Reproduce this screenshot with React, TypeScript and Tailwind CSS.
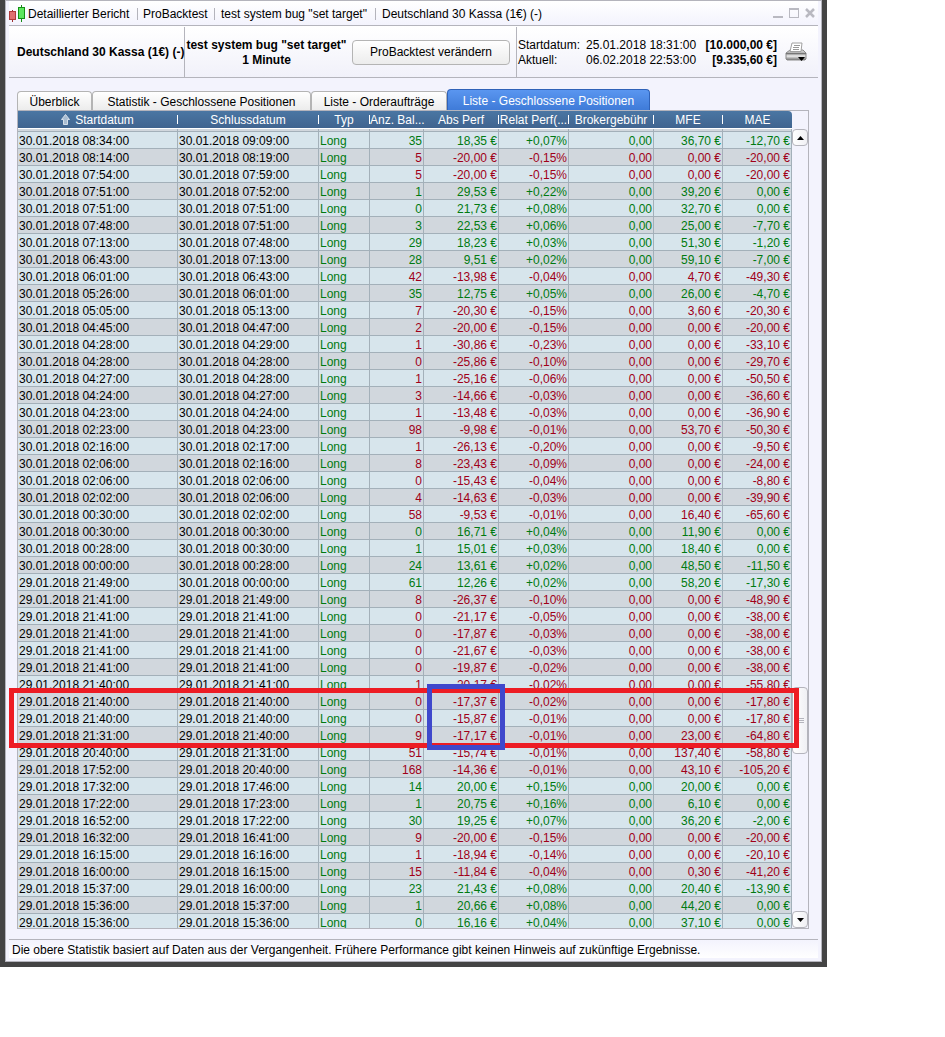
import { clsx } from 'clsx';

type Trade = [
  start: string,
  end: string,
  bars: string,
  perf: string,
  relative: string,
  mfe: string,
  mae: string
];

const trades: Trade[] = [
  ['30.01.2018 08:34:00', '30.01.2018 09:09:00', '35', '18,35', '+0,07', '36,70', '-12,70'],
  ['30.01.2018 08:14:00', '30.01.2018 08:19:00', '5', '-20,00', '-0,15', '0,00', '-20,00'],
  ['30.01.2018 07:54:00', '30.01.2018 07:59:00', '5', '-20,00', '-0,15', '0,00', '-20,00'],
  ['30.01.2018 07:51:00', '30.01.2018 07:52:00', '1', '29,53', '+0,22', '39,20', '0,00'],
  ['30.01.2018 07:51:00', '30.01.2018 07:51:00', '0', '21,73', '+0,08', '32,70', '0,00'],
  ['30.01.2018 07:48:00', '30.01.2018 07:51:00', '3', '22,53', '+0,06', '25,00', '-7,70'],
  ['30.01.2018 07:13:00', '30.01.2018 07:48:00', '29', '18,23', '+0,03', '51,30', '-1,20'],
  ['30.01.2018 06:43:00', '30.01.2018 07:13:00', '28', '9,51', '+0,02', '59,10', '-7,00'],
  ['30.01.2018 06:01:00', '30.01.2018 06:43:00', '42', '-13,98', '-0,04', '4,70', '-49,30'],
  ['30.01.2018 05:26:00', '30.01.2018 06:01:00', '35', '12,75', '+0,05', '26,00', '-4,70'],
  ['30.01.2018 05:05:00', '30.01.2018 05:13:00', '7', '-20,30', '-0,15', '3,60', '-20,30'],
  ['30.01.2018 04:45:00', '30.01.2018 04:47:00', '2', '-20,00', '-0,15', '0,00', '-20,00'],
  ['30.01.2018 04:28:00', '30.01.2018 04:29:00', '1', '-30,86', '-0,23', '0,00', '-33,10'],
  ['30.01.2018 04:28:00', '30.01.2018 04:28:00', '0', '-25,86', '-0,10', '0,00', '-29,70'],
  ['30.01.2018 04:27:00', '30.01.2018 04:28:00', '1', '-25,16', '-0,06', '0,00', '-50,50'],
  ['30.01.2018 04:24:00', '30.01.2018 04:27:00', '3', '-14,66', '-0,03', '0,00', '-36,60'],
  ['30.01.2018 04:23:00', '30.01.2018 04:24:00', '1', '-13,48', '-0,03', '0,00', '-36,90'],
  ['30.01.2018 02:23:00', '30.01.2018 04:23:00', '98', '-9,98', '-0,01', '53,70', '-50,30'],
  ['30.01.2018 02:16:00', '30.01.2018 02:17:00', '1', '-26,13', '-0,20', '0,00', '-9,50'],
  ['30.01.2018 02:06:00', '30.01.2018 02:16:00', '8', '-23,43', '-0,09', '0,00', '-24,00'],
  ['30.01.2018 02:06:00', '30.01.2018 02:06:00', '0', '-15,43', '-0,04', '0,00', '-8,80'],
  ['30.01.2018 02:02:00', '30.01.2018 02:06:00', '4', '-14,63', '-0,03', '0,00', '-39,90'],
  ['30.01.2018 00:30:00', '30.01.2018 02:02:00', '58', '-9,53', '-0,01', '16,40', '-65,60'],
  ['30.01.2018 00:30:00', '30.01.2018 00:30:00', '0', '16,71', '+0,04', '11,90', '0,00'],
  ['30.01.2018 00:28:00', '30.01.2018 00:30:00', '1', '15,01', '+0,03', '18,40', '0,00'],
  ['30.01.2018 00:00:00', '30.01.2018 00:28:00', '24', '13,61', '+0,02', '48,50', '-11,50'],
  ['29.01.2018 21:49:00', '30.01.2018 00:00:00', '61', '12,26', '+0,02', '58,20', '-17,30'],
  ['29.01.2018 21:41:00', '29.01.2018 21:49:00', '8', '-26,37', '-0,10', '0,00', '-48,90'],
  ['29.01.2018 21:41:00', '29.01.2018 21:41:00', '0', '-21,17', '-0,05', '0,00', '-38,00'],
  ['29.01.2018 21:41:00', '29.01.2018 21:41:00', '0', '-17,87', '-0,03', '0,00', '-38,00'],
  ['29.01.2018 21:41:00', '29.01.2018 21:41:00', '0', '-21,67', '-0,03', '0,00', '-38,00'],
  ['29.01.2018 21:41:00', '29.01.2018 21:41:00', '0', '-19,87', '-0,02', '0,00', '-38,00'],
  ['29.01.2018 21:40:00', '29.01.2018 21:41:00', '1', '-20,17', '-0,02', '0,00', '-55,80'],
  ['29.01.2018 21:40:00', '29.01.2018 21:40:00', '0', '-17,37', '-0,02', '0,00', '-17,80'],
  ['29.01.2018 21:40:00', '29.01.2018 21:40:00', '0', '-15,87', '-0,01', '0,00', '-17,80'],
  ['29.01.2018 21:31:00', '29.01.2018 21:40:00', '9', '-17,17', '-0,01', '23,00', '-64,80'],
  ['29.01.2018 20:40:00', '29.01.2018 21:31:00', '51', '-15,74', '-0,01', '137,40', '-58,80'],
  ['29.01.2018 17:52:00', '29.01.2018 20:40:00', '168', '-14,36', '-0,01', '43,10', '-105,20'],
  ['29.01.2018 17:32:00', '29.01.2018 17:46:00', '14', '20,00', '+0,15', '20,00', '0,00'],
  ['29.01.2018 17:22:00', '29.01.2018 17:23:00', '1', '20,75', '+0,16', '6,10', '0,00'],
  ['29.01.2018 16:52:00', '29.01.2018 17:22:00', '30', '19,25', '+0,07', '36,20', '-2,00'],
  ['29.01.2018 16:32:00', '29.01.2018 16:41:00', '9', '-20,00', '-0,15', '0,00', '-20,00'],
  ['29.01.2018 16:15:00', '29.01.2018 16:16:00', '1', '-18,94', '-0,14', '0,00', '-20,10'],
  ['29.01.2018 16:00:00', '29.01.2018 16:15:00', '15', '-11,84', '-0,04', '0,30', '-41,20'],
  ['29.01.2018 15:37:00', '29.01.2018 16:00:00', '23', '21,43', '+0,08', '20,40', '-13,90'],
  ['29.01.2018 15:36:00', '29.01.2018 15:37:00', '1', '20,66', '+0,08', '44,20', '0,00'],
  ['29.01.2018 15:36:00', '29.01.2018 15:36:00', '0', '16,16', '+0,04', '37,10', '0,00'],
];

const columns = [
  { label: 'Startdatum', width: '' },
  { label: 'Schlussdatum', width: 'w-[141px]' },
  { label: 'Typ', width: 'w-[51px]' },
  { label: 'Anz. Bal...', width: 'w-[54px]' },
  { label: 'Abs Perf', width: 'w-[75px]' },
  { label: 'Relat Perf(...', width: 'w-[70px]' },
  { label: 'Brokergebühr', width: 'w-[85px]' },
  { label: 'MFE', width: 'w-[69px]' },
  { label: 'MAE', width: 'w-[69px]' },
];

const tabs = [
  { label: 'Überblick', width: 'w-[75px]' },
  { label: 'Statistik - Geschlossene Positionen', width: 'w-[219px]' },
  { label: 'Liste - Orderaufträge', width: 'w-[136px]' },
  { label: 'Liste - Geschlossene Positionen', width: 'w-[203px]', active: true },
];

function CandlesIcon() {
  return (
    <svg width="16" height="18" viewBox="0 0 16 18" shapeRendering="crispEdges">
      <path d="M3.5 6v12" stroke="#a03030" />
      <rect x="0.5" y="7.5" width="6" height="8" fill="#e07070" stroke="#b03a3a" />
      <path d="M12.5 1v17" stroke="#148a14" />
      <rect x="9.5" y="3.5" width="6" height="11" fill="#5ee65e" stroke="#149014" />
    </svg>
  );
}

function PrinterIcon() {
  return (
    <svg width="22" height="20" viewBox="0 0 22 20">
      <defs>
        <linearGradient id="printer-body" x1="0" y1="0" x2="0" y2="1">
          <stop offset="0" stopColor="#e6e6e6" />
          <stop offset="0.4" stopColor="#9a9a9a" />
          <stop offset="0.6" stopColor="#f0f0f0" />
          <stop offset="1" stopColor="#707070" />
        </linearGradient>
      </defs>
      <path d="M1 11l4-3h13l3 3v6l-1 1H2l-1-1z" fill="url(#printer-body)" stroke="#8a8a8a" />
      <path d="M5 9.500l2-8.500h10l-1 8.500z" fill="#fff" stroke="#a0a0a0" />
      <path d="M9 3.500h6M8 5.500h6M8 7.500h6" stroke="#999" />
      <path d="M1 11.500h20" stroke="#777" />
      <path d="M13 15h7l-3.500 4z" fill="#000" />
    </svg>
  );
}

function TitleBar() {
  return (
    <header className="flex h-[25px] items-center border-b border-[#b4b4bc] bg-gradient-to-b from-white to-[#f3f3fd] pr-[3px]">
      <CandlesIcon />
      <h1 className="flex flex-1 items-center whitespace-nowrap pl-[3px] pt-0.5">
        <span className="w-[109px]">Detaillierter Bericht</span>
        <span className="h-3 w-[6px] border-l border-[#b4b4bc]" />
        <span className="w-[71px]">ProBacktest</span>
        <span className="h-3 w-[7px] border-l border-[#b4b4bc]" />
        <span className="w-[154px]">test system bug "set target"</span>
        <span className="h-3 w-[7px] border-l border-[#b4b4bc]" />
        <span>Deutschland 30 Kassa (1€) (-)</span>
      </h1>
      <div className="flex gap-[6px]">
        <button aria-label="Minimieren">
          <svg width="10" height="10" viewBox="0 0 10 10">
            <path d="M0 9h10" stroke="#b9b9c1" strokeWidth="2" />
          </svg>
        </button>
        <button aria-label="Maximieren">
          <svg width="10" height="10" viewBox="0 0 10 10" shapeRendering="crispEdges">
            <path d="M0.500 1v8.500h9V1" fill="none" stroke="#b9b9c1" />
            <path d="M0 1h10" stroke="#b9b9c1" strokeWidth="2" />
          </svg>
        </button>
        <button aria-label="Schließen">
          <svg width="10" height="10" viewBox="0 0 10 10">
            <path d="M1 1l8 8M9 1l-8 8" stroke="#b9b9c1" strokeWidth="2.500" />
          </svg>
        </button>
      </div>
    </header>
  );
}

function Summary() {
  return (
    <section className="flex h-[52px] whitespace-nowrap border-b border-[#b4b4bc] bg-gradient-to-b from-white to-[#f1f1fa] pt-px leading-[15px]">
      <div className="flex w-[176px] items-center border-r border-[#b4b4bc] pl-2 font-bold">
        Deutschland 30 Kassa (1€) (-)
      </div>
      <div className="flex w-[332px] items-center border-r border-[#b4b4bc]">
        <div className="w-[163px] pt-0.5 text-center font-bold">
          test system bug "set target"
          <br />1 Minute
        </div>
        <button className="ml-1 h-[25px] w-[158px] rounded border border-[#b4b4b4] bg-gradient-to-b from-white to-[#ececec]">
          ProBacktest verändern
        </button>
      </div>
      <dl className="grid grid-cols-[68px_113px_78px] content-center pl-px pt-0.5">
        <dt>Startdatum:</dt>
        <dd>25.01.2018 18:31:00</dd>
        <dd className="text-right font-bold">[10.000,00 €]</dd>
        <dt>Aktuell:</dt>
        <dd>06.02.2018 22:53:00</dd>
        <dd className="text-right font-bold">[9.335,60 €]</dd>
      </dl>
      <button className="ml-2" aria-label="Drucken">
        <PrinterIcon />
      </button>
    </section>
  );
}

function Tabs() {
  return (
    <nav className="flex items-end whitespace-nowrap" role="tablist">
      {tabs.map((tab) => (
        <button
          key={tab.label}
          role="tab"
          aria-selected={!!tab.active}
          className={clsx(
            'rounded-t border border-b-0 pt-px',
            tab.width,
            tab.active
              ? 'h-[21px] border-[#2f62b8] bg-gradient-to-b from-[#5a96f0] to-[#3f7bd8] text-white'
              : 'h-[19px] border-[#b4b4b4] bg-gradient-to-b from-white to-[#ececec]'
          )}
        >
          {tab.label}
        </button>
      ))}
    </nav>
  );
}

function TradeTable() {
  return (
    <div className="h-[817px] min-w-0 flex-1 overflow-hidden">
      <table className="w-full table-fixed border-separate border-spacing-0 whitespace-nowrap">
        <thead className="leading-4 text-white">
          <tr>
            {columns.map((column, index) => (
              <th
                key={column.label}
                className={clsx(
                  'h-[18px] border-b border-white bg-gradient-to-b from-[#4a76a3] to-[#40648f] p-0 font-normal',
                  column.width,
                  index === columns.length - 1 && 'rounded-tr'
                )}
              >
                <div className="flex items-center">
                  <span className="flex flex-1 items-center justify-center">
                    {index === 0 && (
                      <svg className="mr-[5px]" width="9" height="11" viewBox="0 0 9 11">
                        <path
                          d="M4.500 0.500L8.500 5.500H6.500V10.500H2.500V5.500H0.500z"
                          fill="#a9bdd2"
                          stroke="#d5dfea"
                        />
                      </svg>
                    )}
                    {column.label}
                  </span>
                  {index < columns.length - 1 && <span className="h-[9px] w-px bg-white" />}
                </div>
              </th>
            ))}
          </tr>
        </thead>
        <tbody className="leading-[14px]">
          {/* Lower edge of the row scrolled out of view */}
          <tr aria-hidden="true" className="bg-[#d1d7dd]">
            {columns.map((column) => (
              <td key={column.label} className="h-[3px] border-b border-r border-[#a3b0b9] p-0" />
            ))}
          </tr>
          {trades.map(([start, end, bars, perf, relative, mfe, mae], index) => {
            const tone = perf.startsWith('-') ? 'text-[#a00018]' : 'text-[#007a10]';
            const cell = 'h-[17px] border-b border-r border-[#a3b0b9] pb-0 pt-0.5';
            const left = clsx(cell, 'pl-px pr-0');
            const right = clsx(cell, 'pl-0 pr-px text-right', tone);
            return (
              <tr key={index} className={index % 2 ? 'bg-[#d1d7dd]' : 'bg-[#d7e5ec]'}>
                <td className={left}>{start}</td>
                <td className={left}>{end}</td>
                <td className={clsx(left, 'text-[#007a10]')}>Long</td>
                <td className={right}>{bars}</td>
                <td className={right}>{perf} €</td>
                <td className={right}>{relative}%</td>
                <td className={right}>0,00</td>
                <td className={right}>{mfe} €</td>
                <td className={right}>{mae} €</td>
              </tr>
            );
          })}
        </tbody>
      </table>
    </div>
  );
}

function ScrollBar() {
  const button =
    'flex h-[17px] w-4 items-center justify-center rounded border border-[#b4b4bc] bg-gradient-to-r from-white to-[#f0f0f4]';
  return (
    <div className="flex w-4 flex-col pt-[18px]">
      <button className={button} aria-label="Nach oben">
        <svg width="7" height="4" viewBox="0 0 7 4">
          <path d="M0 4l3.500-4L7 4z" />
        </svg>
      </button>
      <div className="grow-[541]" />
      <div className="flex h-[67px] flex-col items-center justify-center gap-px rounded border border-[#b4b4bc] bg-gradient-to-r from-white to-[#f0f0f4]">
        <span className="h-px w-2 bg-[#b4b4bc]" />
        <span className="h-px w-2 bg-[#b4b4bc]" />
        <span className="h-px w-2 bg-[#b4b4bc]" />
      </div>
      <div className="grow-[157]" />
      <button className={button} aria-label="Nach unten">
        <svg width="7" height="4" viewBox="0 0 7 4">
          <path d="M0 0l3.500 4L7 0z" />
        </svg>
      </button>
    </div>
  );
}

export default function App() {
  return (
    <div className="min-h-screen bg-white pr-[118px] font-['Liberation_Sans',Arial,sans-serif] text-[12px] text-black">
      <div className="min-w-[827px] bg-[#444444] px-[5px] pb-[5px]">
        <div className="border border-[#b4b4bc] bg-[#f3f3fd] px-[3px] pb-[3px]">
          <TitleBar />
          <Summary />
          <main className="pl-2 pr-[9px] pt-[11px]">
            <Tabs />
            <div className="relative">
              <div className="flex border border-[#b4b4bc]">
                <TradeTable />
                <ScrollBar />
              </div>
              {/* Marked trades */}
              <div className="pointer-events-none absolute -left-2 right-[10px] top-[578px] h-[60px] border-[5px] border-[#ed1c24]" />
              <div className="pointer-events-none absolute right-[304px] top-[574px] h-[66px] w-[78px] border-[5px] border-[#3f48cc]" />
            </div>
          </main>
          <footer className="mt-[10px] border-t border-[#b4b4bc] bg-gradient-to-b from-[#f3f3fd] to-white pl-[3px] pt-0.5 leading-4">
            Die obere Statistik basiert auf Daten aus der Vergangenheit. Frühere Performance gibt keinen Hinweis auf
            zukünftige Ergebnisse.
          </footer>
        </div>
      </div>
    </div>
  );
}
